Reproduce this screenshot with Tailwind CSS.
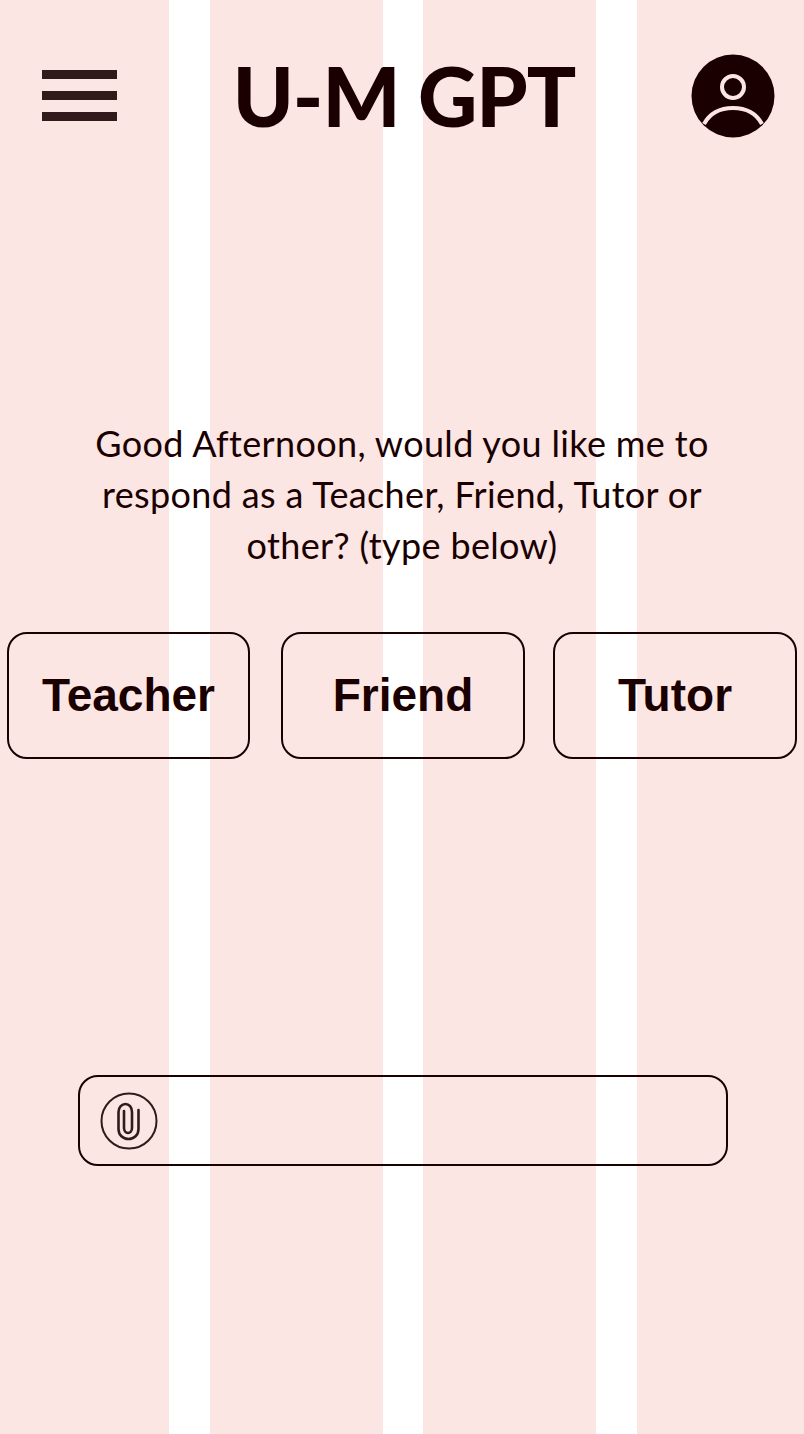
<!DOCTYPE html>
<html lang="en">
<head>
    <meta charset="UTF-8">
    <meta name="viewport" content="width=device-width, initial-scale=1.0">
    <title>U-M GPT</title>
    <script src="https://cdn.jsdelivr.net/npm/@tailwindcss/browser@4"></script>
</head>
<body class="bg-white">
    <div class="relative w-[804px] h-[1434px] overflow-hidden text-[#1a0000] font-['Lato',sans-serif]">
        <!-- layout grid columns -->
        <div class="absolute inset-0 flex">
            <div class="w-[169px] bg-[#fbe6e4]"></div>
            <div class="w-[173px] ml-[41px] bg-[#fbe6e4]"></div>
            <div class="w-[173px] ml-[40px] bg-[#fbe6e4]"></div>
            <div class="w-[167px] ml-[41px] bg-[#fbe6e4]"></div>
        </div>

        <div class="relative flex flex-col">
            <header class="flex items-center justify-between h-[84px] mt-[54px] pl-[42px] pr-[29px]">
                <div class="flex flex-col gap-[12px] w-[75px] mb-px">
                    <div class="h-[9px] bg-[#331a1a]"></div>
                    <div class="h-[9px] bg-[#331a1a]"></div>
                    <div class="h-[9px] bg-[#331a1a]"></div>
                </div>
                <h1 class="text-[82px] leading-[84px] font-black tracking-[-1px] -mt-[2px]">U-M GPT</h1>
                <svg class="w-[84px] h-[84px]" viewBox="0 0 84 84">
                    <circle cx="42" cy="42" r="41.5" fill="#1a0000"/>
                    <circle cx="42" cy="33" r="11" fill="none" stroke="#fbe6e4" stroke-width="4"/>
                    <path d="M13 70 C19 59 30 54 42 54 C54 54 65 59 71 70" fill="none" stroke="#fbe6e4" stroke-width="4"/>
                </svg>
            </header>

            <p class="mt-[280px] mx-auto w-[660px] text-center text-[36px] leading-[51px] tracking-[0.35px]">Good Afternoon, would you like me to respond as a Teacher, Friend, Tutor or other? (type below)</p>

            <div class="mt-[61px] flex pl-[7px]">
                <button class="w-[243px] h-[127px] border-2 border-[#1a0000] rounded-[20px] font-['Liberation_Sans',sans-serif] font-bold text-[46px]">Teacher</button>
                <button class="w-[244px] h-[127px] ml-[31px] border-2 border-[#1a0000] rounded-[20px] font-['Liberation_Sans',sans-serif] font-bold text-[46px]">Friend</button>
                <button class="w-[244px] h-[127px] ml-[28px] border-2 border-[#1a0000] rounded-[20px] font-['Liberation_Sans',sans-serif] font-bold text-[46px]">Tutor</button>
            </div>

            <div class="mt-[316px] ml-[78px] w-[650px] h-[91px] border-[2.5px] border-[#1a0000] rounded-[20px] flex items-center pl-[19.5px]">
                <svg class="w-[58px] h-[58px]" viewBox="0 0 58 58" fill="none" stroke="#331a1a">
                    <circle cx="29" cy="29" r="27.5" stroke-width="2"/>
                    <path d="M38.5 18 V37 C38.5 43 34 47 28.5 47 C23 47 18.5 43 18.5 37 V20 C18.5 15 22 12 25.5 12 C29 12 32 15 32 20 V36 C32 39 30 41 28 41 C26 41 24 39 24 36 V19" stroke-width="2.6" stroke-linecap="round"/>
                </svg>
            </div>
        </div>
    </div>
</body>
</html>
